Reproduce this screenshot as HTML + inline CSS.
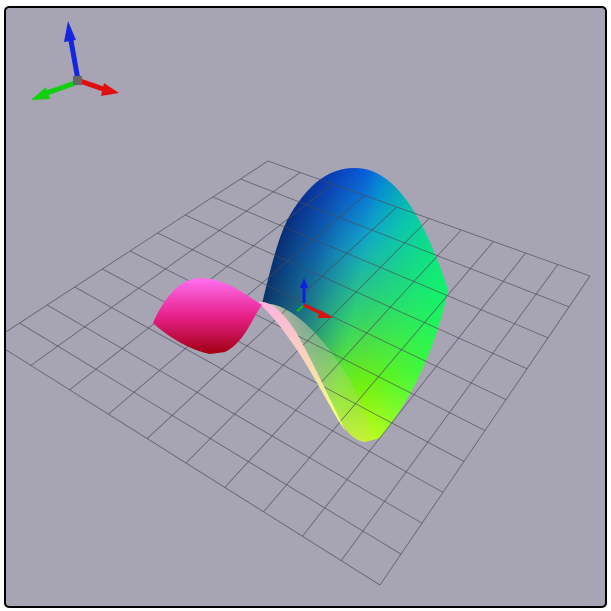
<!DOCTYPE html>
<html><head><style>
html,body{margin:0;padding:0;background:#fff;width:611px;height:611px;overflow:hidden}
</style></head><body>
<svg width="611" height="611" viewBox="0 0 611 611" xmlns="http://www.w3.org/2000/svg">
<defs>
<clipPath id="c"><rect x="5" y="7" width="601" height="600" rx="4"/></clipPath>
<linearGradient id="big" x1="0.3" y1="0" x2="0.55" y2="1">
<stop offset="0" stop-color="#0050f0"/>
<stop offset="0.3" stop-color="#10a8c8"/>
<stop offset="0.55" stop-color="#30d070"/>
<stop offset="0.8" stop-color="#70f010"/>
<stop offset="1" stop-color="#c8ff10"/>
</linearGradient>
<linearGradient id="bigR" x1="0" y1="0" x2="1" y2="0">
<stop offset="0.55" stop-color="#00ff80" stop-opacity="0"/>
<stop offset="1" stop-color="#00ff70" stop-opacity="0.7"/>
</linearGradient>
<linearGradient id="bigL" x1="0" y1="0" x2="1" y2="0.3">
<stop offset="0" stop-color="#000030" stop-opacity="0.95"/>
<stop offset="0.35" stop-color="#102080" stop-opacity="0.5"/>
<stop offset="0.6" stop-color="#2040a0" stop-opacity="0"/>
</linearGradient>
<linearGradient id="pink" x1="0.4" y1="0" x2="0.4" y2="1">
<stop offset="0" stop-color="#ff70f0"/>
<stop offset="0.5" stop-color="#e8208a"/>
<stop offset="1" stop-color="#a00010"/>
</linearGradient>
<linearGradient id="pale" x1="0" y1="0.3" x2="1" y2="0">
<stop offset="0" stop-color="#ffe8d0" stop-opacity="0.95"/>
<stop offset="0.45" stop-color="#e0d8a0" stop-opacity="0.45"/>
<stop offset="1" stop-color="#a0c080" stop-opacity="0"/>
</linearGradient>
<linearGradient id="strip" x1="0" y1="0" x2="0.3" y2="1">
<stop offset="0" stop-color="#ffb0e0"/>
<stop offset="0.5" stop-color="#f8d0c0"/>
<stop offset="1" stop-color="#f0ff80"/>
</linearGradient>
</defs>
<rect width="611" height="611" fill="#fff"/>
<g clip-path="url(#c)">
<rect x="0" y="0" width="611" height="611" fill="#a7a5b4"/>
<path id="lobe" d="M262,304 C272,262 280,232 290,215 C310,182 330,168 355,168 C392,168 422,210 448,290 C440,330 420,390 380,438 L365,442 C350,440 342,425 335,410 C318,370 300,330 262,304 Z" fill="url(#big)"/>
<path d="M262,304 C272,262 280,232 290,215 C310,182 330,168 355,168 C392,168 422,210 448,290 C440,330 420,390 380,438 L365,442 C350,440 342,425 335,410 C318,370 300,330 262,304 Z" fill="url(#bigR)"/>
<path d="M262,304 C272,262 280,232 290,215 C310,182 330,168 355,168 C392,168 422,210 448,290 C440,330 420,390 380,438 L365,442 C350,440 342,425 335,410 C318,370 300,330 262,304 Z" fill="url(#bigL)"/>
<path d="M262,304 C285,300 320,330 350,380 C360,400 370,420 372,440 L365,442 C350,440 342,425 335,410 C318,370 300,330 262,304 Z" fill="url(#pale)"/>
<g stroke="#4a4a55" stroke-width="0.8" stroke-opacity="0.75" fill="none">
<path d="M268,161L590,276M240.4,179L569,306.9M212.8,197L548,337.8M185.2,215L527,368.7M157.6,233L506,399.6M130,251L485,430.5M102.4,269L464,461.4M74.8,287L443,492.3M47.2,305L422,523.2M19.6,323L401,554.1M-8,341L380,585"/>
<path d="M268,161L-8,341M300.2,172.5L30.8,365.4M332.4,184L69.6,389.8M364.6,195.5L108.4,414.2M396.8,207L147.2,438.6M429,218.5L186,463M461.2,230L224.8,487.4M493.4,241.5L263.6,511.8M525.6,253L302.4,536.2M557.8,264.5L341.2,560.6M590,276L380,585"/>
</g>
<path d="M258,302 C270,300 283,312 296,332 C312,360 328,395 346,432 L338,420 C322,392 305,360 290,340 C278,322 268,312 258,302 Z" fill="url(#strip)"/>
<path d="M153,323 C165,295 182,278 200,278 C225,278 245,294 262,305 C252,318 245,342 225,352 L210,354 C190,350 168,337 153,323 Z" fill="url(#pink)"/>
<line x1="304" y1="303" x2="304" y2="286" stroke="#1020e0" stroke-width="3"/>
<path d="M300,288 L304,278 L308,288 Z" fill="#1020e0"/>
<line x1="304" y1="305" x2="324" y2="315" stroke="#e01010" stroke-width="3"/>
<path d="M320,310 L333,318 L318,318 Z" fill="#e01010"/>
<line x1="303" y1="306" x2="297" y2="311" stroke="#10c010" stroke-width="2"/>
</g>
<line x1="78" y1="80" x2="70" y2="35" stroke="#1525e0" stroke-width="5"/>
<path d="M64,42 L68,21 L76,40 Z" fill="#1525e0"/>
<line x1="80" y1="81" x2="106" y2="90" stroke="#e01010" stroke-width="5"/>
<path d="M104,83 L119,93 L101,96 Z" fill="#e01010"/>
<line x1="75" y1="83" x2="44" y2="94" stroke="#10d010" stroke-width="5"/>
<path d="M46,87 L31,100 L50,99 Z" fill="#10d010"/>
<rect x="73" y="76" width="9" height="9" fill="#666"/>
<rect x="5" y="7" width="601" height="600" rx="4" fill="none" stroke="#000" stroke-width="2"/>
</svg>
</body></html>
